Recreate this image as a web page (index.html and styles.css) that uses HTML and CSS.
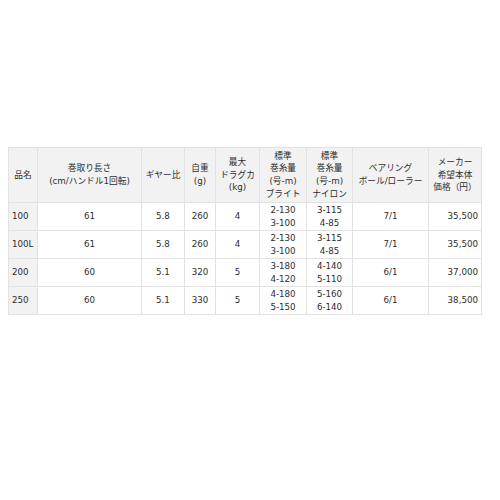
FILE: index.html
```
<!DOCTYPE html>
<html lang="ja">
<head>
<meta charset="utf-8">
<link rel="stylesheet" href="styles.css">
</head>
<body>
<table class="spec">
<colgroup>
<col class="c1"><col class="c2"><col class="c3"><col class="c4"><col class="c5"><col class="c6"><col class="c7"><col class="c8"><col class="c9">
</colgroup>
<thead>
<tr class="head">
<th>品名</th>
<th>巻取り長さ<br>(cm/ハンドル1回転)</th>
<th>ギヤー比</th>
<th>自重<br>(g)</th>
<th>最大<br>ドラグカ<br>(kg)</th>
<th>標準<br>巻糸量<br>(号-m)<br>ブライト</th>
<th>標準<br>巻糸量<br>(号-m)<br>ナイロン</th>
<th>ベアリング<br>ボール/ローラー</th>
<th>メーカー<br>希望本体<br>価格（円）</th>
</tr>
</thead>
<tbody>
<tr><td class="name">100</td><td>61</td><td>5.8</td><td>260</td><td>4</td><td>2-130<br>3-100</td><td>3-115<br>4-85</td><td>7/1</td><td class="r">35,500</td></tr>
<tr><td class="name">100L</td><td>61</td><td>5.8</td><td>260</td><td>4</td><td>2-130<br>3-100</td><td>3-115<br>4-85</td><td>7/1</td><td class="r">35,500</td></tr>
<tr><td class="name">200</td><td>60</td><td>5.1</td><td>320</td><td>5</td><td>3-180<br>4-120</td><td>4-140<br>5-110</td><td>6/1</td><td class="r">37,000</td></tr>
<tr><td class="name">250</td><td>60</td><td>5.1</td><td>330</td><td>5</td><td>4-180<br>5-150</td><td>5-160<br>6-140</td><td>6/1</td><td class="r">38,500</td></tr>
</tbody>
</table>
</body>
</html>
```
FILE: styles.css
```
html, body {
  margin: 0;
  padding: 0;
  background: #ffffff;
}
body {
  font-family: "DejaVu Sans", "Noto Sans CJK JP", sans-serif;
  font-size: 8.7px;
  line-height: 12.6px;
  color: #2e2e2e;
}
.spec {
  margin: 147px 0 0 8px;
  width: 473px;
  table-layout: fixed;
  border-collapse: collapse;
  border: 1px solid #dcdcdc;
}
.c1 { width: 29px; }
.c2 { width: 104px; }
.c3 { width: 43px; }
.c4 { width: 31px; }
.c5 { width: 44px; }
.c6 { width: 47px; }
.c7 { width: 46px; }
.c8 { width: 76px; }
.c9 { width: 53px; }
.spec th, .spec td {
  border: 1px solid #e2e2e2;
  padding: 0 3px;
  text-align: center;
  vertical-align: middle;
  font-weight: normal;
}
.spec th {
  background: #f2f2f2;
  height: 54px;
}
.spec td {
  height: 27px;
}
.spec td.name {
  background: #f2f2f2;
  text-align: left;
}
.spec td.r {
  text-align: right;
}
```
